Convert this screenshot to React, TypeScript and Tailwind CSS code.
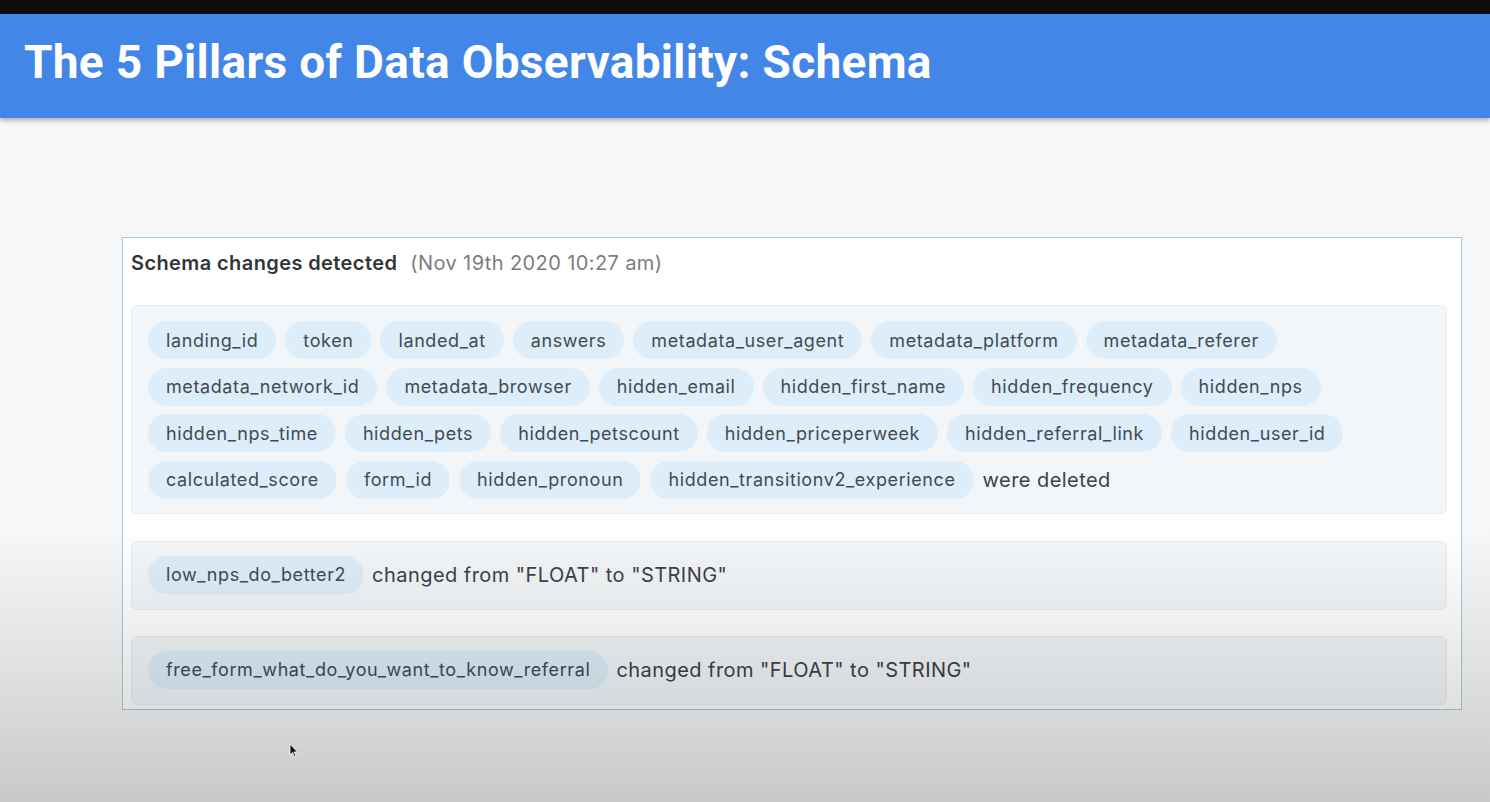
import React from "react";

const deleted = [
  "landing_id","token","landed_at","answers","metadata_user_agent","metadata_platform","metadata_referer",
  "metadata_network_id","metadata_browser","hidden_email","hidden_first_name","hidden_frequency","hidden_nps",
  "hidden_nps_time","hidden_pets","hidden_petscount","hidden_priceperweek","hidden_referral_link","hidden_user_id",
  "calculated_score","form_id","hidden_pronoun","hidden_transitionv2_experience",
];

function Chip({ name }: { name: string }) {
  return (
    <span className="inline-flex h-[38px] items-center rounded-full bg-[#ddeefa] px-[18px] text-[18px] tracking-[0.6px] text-[#444a50]">
      {name}
    </span>
  );
}

export default function App() {
  return (
    <div
      className="relative h-[802px] w-[1490px] overflow-hidden bg-[#f7f7f7]"
      style={{ fontFamily: "Inter, 'Noto Sans', sans-serif" }}
    >
      <div className="h-[14px] bg-[#0d0d0d]" />
      <div className="flex h-[104px] items-center bg-[#4286e8] pb-[8px] pl-[24px] shadow-[0_3px_4px_rgba(0,0,0,0.25)]">
        <h1
          className="text-[46px] font-bold tracking-[0.3px] text-white"
          style={{ fontFamily: "Roboto, 'Liberation Sans', sans-serif" }}
        >
          The 5 Pillars of Data Observability: Schema
        </h1>
      </div>

      <div className="pl-[122px] pt-[119px]">
        <div className="w-[1340px] border border-[#9fcbe9] bg-white pb-[4px] pl-[8px] pr-[14px] pt-[10px]">
          <div className="flex items-baseline gap-[13px] tracking-[0.4px]">
            <span className="text-[20px] font-semibold text-[#333639]">Schema changes detected</span>
            <span className="text-[20px] text-[#7a7d80]">(Nov 19th 2020 10:27 am)</span>
          </div>

          <div className="mt-[27px] rounded-[6px] border border-[#e8edf1] bg-[#f2f6f9] px-[16px] pb-[14px] pt-[15px]">
            <div className="flex flex-wrap items-center gap-x-[9px] gap-y-[8.5px]">
              {deleted.map((d) => (
                <Chip key={d} name={d} />
              ))}
              <span className="text-[20px] tracking-[0.45px] text-[#3d4146]">were deleted</span>
            </div>
          </div>

          <div className="mt-[27px] flex items-center gap-[8px] rounded-[6px] border border-[#e8edf1] bg-[#f2f6f9] px-[16px] pb-[15px] pt-[14px]">
            <Chip name="low_nps_do_better2" />
            <span className="text-[20px] tracking-[0.45px] text-[#3d4146]">changed from "FLOAT" to "STRING"</span>
          </div>

          <div className="mt-[26px] flex items-center gap-[8px] rounded-[6px] border border-[#e8edf1] bg-[#f2f6f9] px-[16px] pb-[15px] pt-[14px]">
            <Chip name="free_form_what_do_you_want_to_know_referral" />
            <span className="text-[20px] tracking-[0.45px] text-[#3d4146]">changed from "FLOAT" to "STRING"</span>
          </div>
        </div>
      </div>

      <div className="pointer-events-none absolute inset-0 bg-[linear-gradient(to_bottom,rgba(0,0,0,0)_0%,rgba(0,0,0,0)_66%,rgba(0,0,0,0.1)_85%,rgba(0,0,0,0.19)_100%)]" />

      <svg className="absolute left-[289px] top-[743px]" width="10" height="16" viewBox="0 0 10 16">
        <path d="M1 1 L1 12 L3.5 9.5 L5.5 14 L7 13.3 L5 9 L8.5 9 Z" fill="#111" stroke="#fff" strokeWidth="0.8" />
      </svg>
    </div>
  );
}
